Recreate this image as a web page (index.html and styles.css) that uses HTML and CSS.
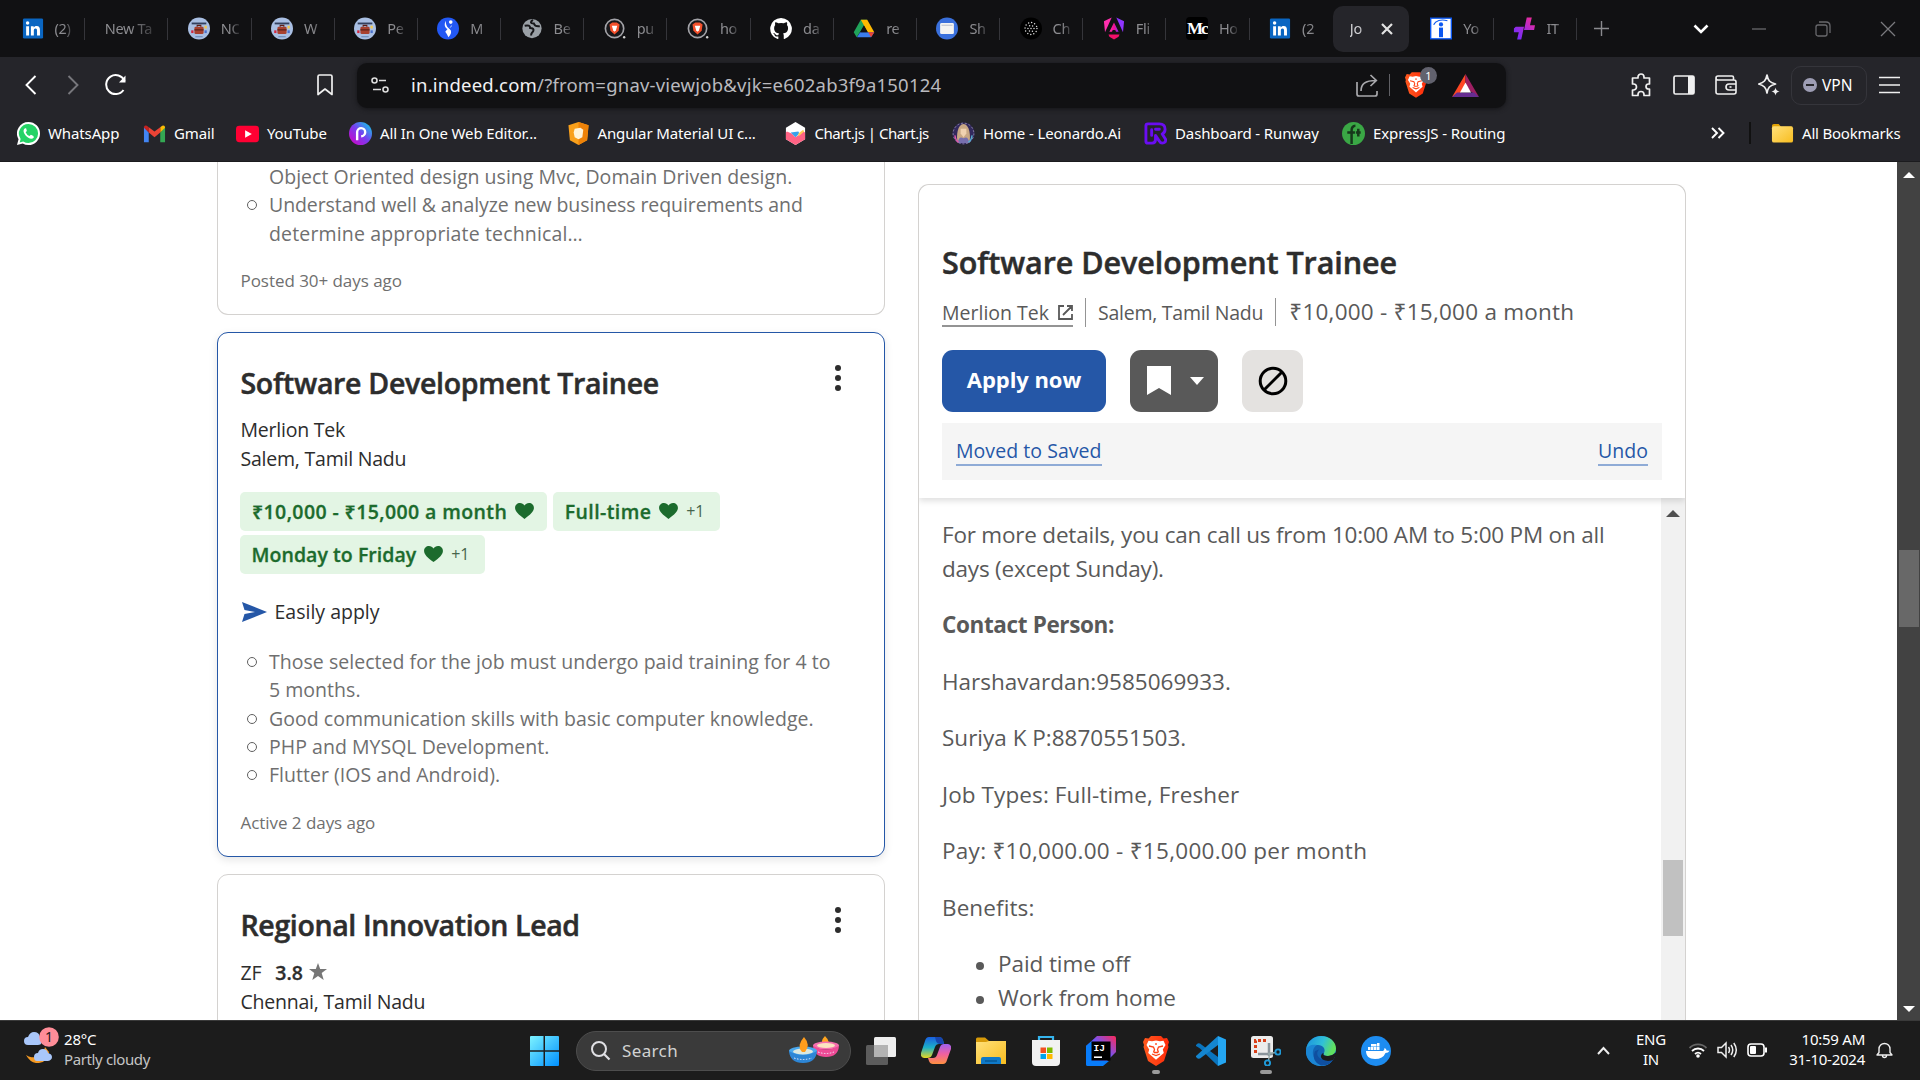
FILE: index.html
```html
<!DOCTYPE html>
<html lang="en">
<head>
<meta charset="utf-8">
<title>Software Development Trainee - Indeed</title>
<link rel="stylesheet" href="styles.css">
</head>
<body>
<svg class="defs" width="0" height="0" aria-hidden="true">
  <defs>
    <linearGradient id="gPink" x1="0" y1="0" x2="1" y2="0"><stop offset="0" stop-color="#ff2fae"/><stop offset=".5" stop-color="#f0108f"/><stop offset="1" stop-color="#8a2cff"/></linearGradient>
    <linearGradient id="gTensor" x1="0" y1="1" x2="1" y2="0"><stop offset="0" stop-color="#6a2bff"/><stop offset=".5" stop-color="#a42bd8"/><stop offset="1" stop-color="#ff2b8c"/></linearGradient>
    <linearGradient id="gPics" x1="0" y1="1" x2="1" y2="0"><stop offset="0" stop-color="#d900c0"/><stop offset=".5" stop-color="#7a3cf0"/><stop offset="1" stop-color="#00e0e8"/></linearGradient>
    <linearGradient id="gFolder" x1="0" y1="0" x2="1" y2="1"><stop offset="0" stop-color="#ffe07a"/><stop offset="1" stop-color="#f8bd1f"/></linearGradient>
    <linearGradient id="gWin" x1="0" y1="0" x2="1" y2="1"><stop offset="0" stop-color="#7df3ff"/><stop offset="1" stop-color="#0090ff"/></linearGradient>
    <linearGradient id="gCopA" x1="0" y1="0" x2="0" y2="1"><stop offset="0" stop-color="#1a5fe0"/><stop offset=".5" stop-color="#1cb0c8"/><stop offset="1" stop-color="#e8d820"/></linearGradient>
    <linearGradient id="gCopB" x1="0" y1="0" x2="0" y2="1"><stop offset="0" stop-color="#a060f0"/><stop offset=".5" stop-color="#f060a0"/><stop offset="1" stop-color="#ff9040"/></linearGradient>
    <linearGradient id="gEdge" x1="0" y1="0" x2="1" y2=".3"><stop offset="0" stop-color="#1a8fe0"/><stop offset=".6" stop-color="#30c0d8"/><stop offset="1" stop-color="#60e060"/></linearGradient>
    <linearGradient id="gIj" x1="0" y1="1" x2="1" y2="0"><stop offset="0" stop-color="#087cfa"/><stop offset=".55" stop-color="#6b57ff"/><stop offset="1" stop-color="#fe2857"/></linearGradient>
    <linearGradient id="gBrave" x1="0" y1="0" x2="1" y2="0"><stop offset="0" stop-color="#ff5a1f"/><stop offset="1" stop-color="#ff2a0a"/></linearGradient>
    <symbol id="linkedin" viewBox="0 0 24 24"><rect x="1" y="1" width="22" height="22" rx="1.500" fill="#0a66c2"/><path d="M4.500 9.500h3.200v10H4.500zM9.700 9.500h3v1.400c.6-1 1.700-1.700 3.200-1.700 3 0 3.700 1.900 3.700 4.600v5.700h-3.200v-5c0-1.300-.1-2.600-1.700-2.600s-1.800 1.200-1.800 2.500v5.100H9.700z" fill="#fff"/><circle cx="6.100" cy="6.100" r="1.900" fill="#fff"/></symbol>
    <symbol id="jobbag" viewBox="0 0 24 24"><circle cx="12" cy="12" r="12" fill="#a9bfe3"/><path d="M4 6.500h16" stroke="#33405e" stroke-width="2"/><rect x="7" y="10" width="10" height="8" rx="1.500" fill="#a8412f"/><path d="M10 10V8.600h4V10M7 13.500h10" stroke="#5d2018" stroke-width="1.200" fill="none"/><path d="M3.500 14h2.500v3H3.500z" fill="#d3273e"/><path d="M18 9h2.500v3H18z" fill="#f4c94b"/><path d="M18 14h2.500v3H18z" fill="#4a70cc"/><path d="M8 21h8" stroke="#5c7fae"/></symbol>
    <symbol id="brave" viewBox="0 0 26 30"><path d="M8 0h10l2.500 2.500L24 2l2 4-1 3 .5 2-4.500 14L13 30 5 25 .500 11 1 9 0 6l2-4 3.500.5z" fill="url(#gBrave)"/><path d="M13 4.500l4 .8 3.500-.5 2 4.200-2.700 4.500 1 3.500-3.500 3-4.300 3.800L8.700 20l-3.500-3 1-3.500L3.500 9l2-4.200 3.500.5z" fill="#fff"/><path d="M6 10l4.500 1 1 2.500-1 3M20 10l-4.500 1-1 2.500 1 3M13 7v2M9 18l4 1.500 4-1.500M11 16.500h4" stroke="#ff4315" stroke-width="1.300" fill="none"/></symbol>
    <symbol id="bravering" viewBox="0 0 24 24"><circle cx="11.500" cy="12" r="10" fill="#17171a" stroke="#a3a3a8" stroke-width="1.800"/><path d="M9 5.500h5l3 2-1 7-4.500 4-4.500-4-1-7z" fill="#f4502b"/><path d="M8.500 9h6l-1.500 5-1.500 1.500L10 14z" fill="#fff"/><circle cx="22" cy="21.500" r="1.300" fill="#d0d0d0"/></symbol>
    <symbol id="heart" viewBox="0 0 20 17"><path d="M10 17C3.500 12 0 9 0 5.200 0 2.200 2.300 0 5.200 0 7.200 0 9 1 10 2.600 11 1 12.800 0 14.800 0 17.700 0 20 2.200 20 5.200 20 9 16.500 12 10 17z" fill="#1c6b2d"/></symbol>
  </defs>
</svg>

<header class="browser">
  <div class="tabs">
    <div class="tab"><svg class="fav"><use href="#linkedin"/></svg><span>(2)</span></div>
    <div class="tab wide"><span>New Ta</span></div>
    <div class="tab"><svg class="fav"><use href="#jobbag"/></svg><span>NO</span></div>
    <div class="tab"><svg class="fav"><use href="#jobbag"/></svg><span>W</span></div>
    <div class="tab"><svg class="fav"><use href="#jobbag"/></svg><span>Pe</span></div>
    <div class="tab"><svg class="fav" viewBox="0 0 24 24"><circle cx="12" cy="12" r="12" fill="#2258f4"/><circle cx="15" cy="5" r="2" fill="#fff"/><path d="M9.500 3.500C7.500 8 8.500 11 11.500 12.500L9 15.500q2 2.500 3.500 6 4-4 2.500-7.500L12.500 11.500Q9.500 9 9.500 3.500zM16.500 8q-.5 3-3 3.500z" fill="#fff"/></svg><span>M</span></div>
    <div class="tab"><svg class="fav" viewBox="0 0 24 24"><circle cx="12" cy="12" r="10.500" fill="#9aa0a6"/><path d="M4 9c4-1 6 0 6 2.500 3 0 4 1 3.500 3-.5 2-2.500 1.500-2.500 5M13 2.500c-3 2-3 4 1 4 1 3 3 3.500 6.500 3" fill="none" stroke="#17171a" stroke-width="2.200"/></svg><span>Be</span></div>
    <div class="tab"><svg class="fav"><use href="#bravering"/></svg><span>pu</span></div>
    <div class="tab"><svg class="fav"><use href="#bravering"/></svg><span>ho</span></div>
    <div class="tab"><svg class="fav" viewBox="0 0 24 24"><path fill="#fff" d="M12 .5A11.800 11.800 0 0 0 8.300 23.500c.6.1.8-.3.8-.6v-2.200c-3.300.7-4-1.400-4-1.400-.5-1.400-1.300-1.800-1.300-1.800-1.100-.7.1-.7.1-.7 1.200.1 1.800 1.200 1.800 1.200 1.100 1.800 2.800 1.300 3.500 1 .1-.8.4-1.300.8-1.600-2.700-.3-5.500-1.300-5.500-5.900 0-1.300.5-2.400 1.200-3.200-.1-.3-.5-1.500.1-3.200 0 0 1-.3 3.300 1.200a11.500 11.500 0 0 1 6 0c2.300-1.500 3.300-1.200 3.300-1.200.7 1.700.2 2.900.1 3.200.8.800 1.200 1.900 1.200 3.200 0 4.600-2.800 5.600-5.500 5.900.4.400.8 1.100.8 2.200v3.300c0 .3.200.7.800.6A11.800 11.800 0 0 0 12 .5z"/></svg><span>da</span></div>
    <div class="tab"><svg class="fav" viewBox="0 0 24 24"><path d="M8.500 2.500h7l-8 13.500-3.500 5.500L.8 16z" fill="#20a35a"/><path d="M8.500 2.500h7L23.200 16h-7z" fill="#ffba00"/><path d="M7.800 16h15.400l-3.500 5.500H4.300z" fill="#3b7ded"/><path d="M16.500 16h6.700l-3.500 5.500z" fill="#ea4335"/><path d="M12 9l-4 7h8z" fill="#111113"/></svg><span>re</span></div>
    <div class="tab"><svg class="fav" viewBox="0 0 24 24"><circle cx="12" cy="12" r="12" fill="#3a70dc"/><rect x="4.500" y="6" width="15" height="12" rx="1.500" fill="#f4f4f2"/><path d="M6 8.500h12" stroke="#c9cdd6" stroke-width="1.500"/></svg><span>Sh</span></div>
    <div class="tab"><svg class="fav" viewBox="0 0 24 24"><circle cx="12" cy="12" r="12" fill="#000"/><g fill="none" stroke="#ddd" stroke-width="1.600" stroke-linecap="round"><circle cx="12" cy="12" r="6.500" stroke-dasharray="0 3.400"/><circle cx="12" cy="12" r="3.300" stroke-dasharray="0 3.400"/><path d="M12 12h.01"/></g></svg><span>Ch</span></div>
    <div class="tab"><svg class="fav" viewBox="0 0 24 24"><path d="M9.500 0L1 4l1.200 12z" fill="#ff2fae"/><path d="M14.500 0L23 4l-1.200 12z" fill="#8f35ff"/><path d="M12 5.500l5 10h-2.800l-.8-2h-2.800l-.8 2H7z" fill="url(#gPink)"/><path d="M6 18.500h12l-1 2.500-5 3-5-3z" fill="#f0106a"/></svg><span>Fli</span></div>
    <div class="tab"><span class="fav medium">Mc</span><span>Ho</span></div>
    <div class="tab plain"><svg class="fav"><use href="#linkedin"/></svg><span>(2</span></div>
    <div class="tab active"><span>Jo</span><svg class="close" viewBox="0 0 12 12"><path d="M1 1l10 10M11 1L1 11" stroke="#e2e2e2" stroke-width="2.200"/></svg></div>
    <div class="tab"><svg class="fav" viewBox="0 0 24 24"><rect width="24" height="24" fill="#0b57f0"/><rect x="1.500" y="1.500" width="21" height="21" fill="#fff"/><path d="M4 8C6 3.500 12 1.500 19 3.500" fill="none" stroke="#0b57f0" stroke-width="1.300"/><circle cx="12" cy="7.500" r="2.300" fill="#0b57f0"/><path d="M9.800 11h4.400v10.500H9.800z" fill="#0b57f0"/></svg><span>Yo</span></div>
    <div class="tab"><svg class="fav" viewBox="0 0 24 24"><path d="M1 12l2-2h9l-3 14H4.500l1.800-8H1zM15 0h5.500l-2 8.500H24l-1 5H12z" fill="url(#gTensor)"/></svg><span>IT</span></div>
    <svg class="plus" viewBox="0 0 16 16"><path d="M8 0v16M0 8h16" stroke="#8a8a8e" stroke-width="1.500"/></svg>
    <div class="winbtns">
      <svg class="chev" viewBox="0 0 16 10" width="16" height="10"><path d="M1.500 1.500L8 8l6.500-6.500" fill="none" stroke="#fff" stroke-width="2.600"/></svg>
      <svg viewBox="0 0 16 16" width="16" height="16"><path d="M1 8h14" stroke="#68686c" stroke-width="1.300"/></svg>
      <svg viewBox="0 0 16 16" width="16" height="16"><g fill="none" stroke="#68686c" stroke-width="1.300"><rect x="1" y="4" width="11" height="11" rx="2"/><path d="M4 1h7q4 0 4 4v7"/></g></svg>
      <svg viewBox="0 0 16 16" width="16" height="16"><path d="M1 1l14 14M15 1L1 15" stroke="#7a7a7e" stroke-width="1.300"/></svg>
    </div>
  </div>

  <div class="toolbar">
    <div class="nav">
      <svg width="12" height="20" viewBox="0 0 12 20"><path d="M10.500 1L1.500 10l9 9" fill="none" stroke="#fff" stroke-width="1.900"/></svg>
      <svg width="12" height="20" viewBox="0 0 12 20"><path d="M1.500 1l9 9-9 9" fill="none" stroke="#77777c" stroke-width="1.900"/></svg>
      <svg class="reload" width="24" height="22" viewBox="0 0 24 22"><path d="M20.500 7A9.500 9.500 0 1 0 19.500 16" fill="none" stroke="#fff" stroke-width="2"/><path d="M15 8.500h6.500V1.500z" fill="#fff"/></svg>
      <svg class="mark" width="16" height="22" viewBox="0 0 16 22"><path d="M1 2.500Q1 1 2.500 1h11Q15 1 15 2.500V20.500L8 15l-7 5.500z" fill="none" stroke="#f0f0f0" stroke-width="1.700" stroke-linejoin="round"/></svg>
    </div>
    <div class="urlbar">
      <svg width="18" height="18" viewBox="0 0 18 18"><g fill="none" stroke="#ddd" stroke-width="1.600"><circle cx="3.500" cy="4.500" r="2.500"/><circle cx="14.500" cy="13.500" r="2.500"/><path d="M8 4.500h7M2 13.500h8"/></g></svg>
      <div class="url"><b>in.indeed.com</b>/?from=gnav-viewjob&amp;vjk=e602ab3f9a150124</div>
      <svg class="share" width="22" height="23" viewBox="0 0 22 23"><g fill="none" stroke="#a8a8ac" stroke-width="1.700"><path d="M1 8v12q0 2 2 2h16q2 0 2-2v-3M5 17c0-7 4-10.500 15-10.500M14.500 1l5.800 5.500L14.500 12"/></g></svg>
      <i class="vline"></i>
      <span class="shield"><svg width="22" height="26"><use href="#brave"/></svg><em>1</em></span>
      <svg width="27" height="23" viewBox="0 0 27 23"><path d="M13.500 0L0 23l13.500-7z" fill="#ff4724"/><path d="M13.500 0L27 23l-13.500-9z" fill="#9e1f63"/><path d="M0 23h27l-5-4.500H5z" fill="#662d91"/><path d="M13.500 8.500L8 18.500h11z" fill="#fff"/></svg>
    </div>
    <div class="tools">
      <svg width="22" height="24" viewBox="0 0 22 24"><path d="M1.500 5H7V4a2.500 2.500 0 0 1 6 0v1h5.500v6h-1a2.500 2.500 0 0 0 0 5h1v6.500H13v-1a2.500 2.500 0 0 0-6 0v1H1.500V17h1a2.500 2.500 0 0 0 0-6h-1z" transform="translate(1)" fill="none" stroke="#f0f0f0" stroke-width="1.700" stroke-linejoin="round"/></svg>
      <svg width="22" height="20" viewBox="0 0 22 20"><rect x="1" y="1" width="20" height="18" rx="1.500" fill="none" stroke="#f0f0f0" stroke-width="1.700"/><path d="M15 1h6v18h-6z" fill="#f0f0f0"/></svg>
      <svg width="22" height="20" viewBox="0 0 22 20"><g fill="none" stroke="#f0f0f0" stroke-width="1.600"><path d="M18.500 5V2.500Q18.500 1 17 1H3Q1 1 1 3t2 2h16q2 0 2 2v10q0 2-2 2H3q-2 0-2-2V3M21 9h-7a3 3 0 0 0 0 6h7"/><path d="M14.500 12h2"/></g></svg>
      <svg width="22" height="22" viewBox="0 0 22 22"><path d="M9 1c1 5.500 2.500 7.500 8.500 9-6 1.500-7.500 3.500-8.500 9C8 13.500 6 11.500.800 10 6 8.500 8 6.500 9 1z" fill="none" stroke="#f0f0f0" stroke-width="1.700" stroke-linejoin="round"/><path d="M17.500 13.500q.5 3.500 4 4-3.500.5-4 4-.5-3.500-4-4 3.500-.5 4-4z" fill="#f0f0f0"/></svg>
      <div class="vpn"><i></i>VPN</div>
      <svg class="menu" width="21" height="18" viewBox="0 0 21 18"><path d="M0 1.500h21M0 9h21M0 16.500h21" stroke="#f0f0f0" stroke-width="1.700"/></svg>
    </div>
  </div>

  <div class="bookmarks">
    <div><svg viewBox="0 0 24 24"><path d="M12 0a12 12 0 0 1 0 24q-3.500 0-6-1.600L0 24l1.600-6A12 12 0 0 1 12 0z" fill="#fff"/><path d="M12 2a10 10 0 0 1 0 20q-3 0-5.500-1.600L2.800 21.300l1-3.600A10 10 0 0 1 12 2z" fill="#25d366"/><path d="M8.500 6.500C6 8 6.500 11 9 14s6 4.500 8.500 2.500l-.3-2-2.700-1.300-1.500 1.500q-2.700-1-4-4L10.300 9.300 9.500 6.600z" fill="#fff"/></svg>WhatsApp</div>
    <div><svg viewBox="0 0 24 24"><path d="M1 5v16h5V11z" fill="#4285f4"/><path d="M18 11v10h5V5z" fill="#34a853"/><path d="M1 6l5 5V5.500L4 4Q1 3 1 6z" fill="#c5221f"/><path d="M18 5.500V11l5-5q0-3-3-2z" fill="#fbbc04"/><path d="M6 5.500V11l6 5 6-5V5.500L12 10z" fill="#ea4335"/></svg>Gmail</div>
    <div><svg viewBox="0 0 24 24"><rect x="0" y="4" width="24" height="17" rx="3.500" fill="#f03"/><path d="M9.500 8.500v8l7-4z" fill="#fff"/></svg>YouTube</div>
    <div><svg viewBox="0 0 24 24"><circle cx="12" cy="12" r="12" fill="url(#gPics)"/><path d="M8.500 19v-8.500a4.200 4.200 0 1 1 4.200 4.300" fill="none" stroke="#fff" stroke-width="2.500"/></svg>All In One Web Editor...</div>
    <div><svg viewBox="0 0 24 24"><path d="M12 0l10.500 3.500L21 19l-9 5-9-5L1.500 3.500z" fill="#f9a01b"/><path d="M12 0l10.500 3.500L21 19l-9 5z" fill="#ee8208"/><path d="M8 7l6-1 3 2-1 8-4 2-4-2-1-5z" fill="#fff3d8"/></svg>Angular Material UI c...</div>
    <div class="chart"><svg viewBox="0 0 24 24"><path d="M12 0l10 6v12l-10 6-10-6V6z" fill="#fff"/><path d="M3 10l5 2 4 4 8-6 2 1v7l-10 6-10-6v-7z" fill="#ff6384"/><path d="M7 11l5 5 4-4-1-2z" fill="#36a2eb"/><path d="M15 12l5-4 1 2-6 5z" fill="#ffce56"/></svg>Chart.js | Chart.js</div>
    <div><svg viewBox="0 0 24 24"><circle cx="12" cy="12" r="11.500" fill="#33295d"/><path d="M6 22C4 14 6 2 12 2s8 12 6 20z" fill="#c9a884"/><path d="M9 7h6v5l-3 4-3-4z" fill="#f0d2b0"/><path d="M6 22q1-8 6-5 5-3 6 5z" fill="#776fae"/><circle cx="12" cy="12" r="10.800" fill="none" stroke="#8f8ba8" stroke-dasharray="2 2"/><path d="M3 14q1 6 4 7" stroke="#e056a8" fill="none" stroke-width="1.500"/><path d="M21 14q-1 6-4 7" stroke="#55b0d0" fill="none" stroke-width="1.500"/></svg>Home - Leonardo.Ai</div>
    <div><svg viewBox="0 0 24 24"><path d="M7 22H4q-2 0-2-2V4q0-2 2-2h12q6 0 6 5.500 0 3.500-3 5l3.500 5.500q.5 4-3.500 4-2 0-3-2l-4-6v4q0 4-3.500 4zM8 8v6M12 7.500h4" fill="none" stroke="#6a0df2" stroke-width="3" stroke-linejoin="round" stroke-linecap="round"/></svg>Dashboard - Runway</div>
    <div><svg viewBox="0 0 24 24"><circle cx="12" cy="12" r="12" fill="#3aa745"/><path d="M10 23V9q0-5 4-5M5.500 11h8M17 7v8M14.500 11h5" fill="none" stroke="#16371b" stroke-width="2.600"/></svg>ExpressJS - Routing</div>
    <div class="more"><svg viewBox="0 0 14 12"><path d="M1 1l5 5-5 5M7.500 1l5 5-5 5" fill="none" stroke="#fff" stroke-width="1.900"/></svg><i></i></div>
    <div class="all"><svg viewBox="0 0 24 24"><path d="M1 4q0-2 2-2h5l2.500 3H22v6H1z" fill="#e0a106"/><rect x="1" y="4.500" width="22" height="17" rx="2" fill="url(#gFolder)"/></svg>All Bookmarks</div>
  </div>
</header>

<main class="page">
  <section class="list">
    <article class="card first">
      <ul class="points">
        <li class="cont">Object Oriented design using Mvc, Domain Driven design.</li>
        <li>Understand well &amp; analyze new business requirements and <span class="tail">determine appropriate technical…</span></li>
      </ul>
      <p class="age">Posted 30+ days ago</p>
    </article>

    <article class="card selected">
      <div class="head"><h2>Software Development Trainee</h2><span class="kebab"><i></i><i></i><i></i></span></div>
      <div class="company"><p>Merlion Tek</p><p class="place">Salem, Tamil Nadu</p></div>
      <div class="pills">
        <span class="pill"><b class="pay">₹10,000 - ₹15,000 a month</b><svg><use href="#heart"/></svg></span>
        <span class="pill plus1"><b class="ft">Full-time</b><svg><use href="#heart"/></svg><small>+1</small></span>
        <span class="pill plus1"><b>Monday to Friday</b><svg><use href="#heart"/></svg><small>+1</small></span>
      </div>
      <p class="easy"><svg width="25" height="20" viewBox="0 0 25 20"><path d="M0 0l25 10L0 20l2.500-8L13 10 2.500 8z" fill="#2557a7"/></svg>Easily apply</p>
      <ul class="points">
        <li>Those selected for the job must undergo paid training for 4 to 5 months.</li>
        <li>Good communication skills with basic computer knowledge.</li>
        <li>PHP and MYSQL Development.</li>
        <li>Flutter (IOS and Android).</li>
      </ul>
      <p class="age">Active 2 days ago</p>
    </article>

    <article class="card">
      <div class="head"><h2 class="tight">Regional Innovation Lead</h2><span class="kebab"><i></i><i></i><i></i></span></div>
      <div class="company"><p class="rating">ZF <b>3.8</b><svg width="18" height="17" viewBox="0 0 18 17"><path d="M9 0l2.200 6H18l-5.300 4 2 7L9 13l-5.700 4 2-7L0 6h6.800z" fill="#767676"/></svg></p><p class="place">Chennai, Tamil Nadu</p></div>
    </article>
  </section>

  <section class="detail">
    <div class="dhead">
      <h1>Software Development Trainee</h1>
      <div class="meta">
        <a class="firm">Merlion Tek<svg width="15" height="15" viewBox="0 0 15 15"><path d="M6 1H1v13h13V9M9 1h5v5M14 1L5 10" fill="none" stroke="#595959" stroke-width="1.800"/></svg></a>
        <span class="loc">Salem, Tamil Nadu</span>
        <span class="sal">₹10,000 - ₹15,000 a month</span>
      </div>
      <div class="actions">
        <button class="apply">Apply now</button>
        <button class="save"><svg width="24" height="29" viewBox="0 0 24 29"><path d="M0 0h24v29l-12-7-12 7z" fill="#fff"/></svg><svg width="14" height="8" viewBox="0 0 14 8"><path d="M0 0h14L7 8z" fill="#fff"/></svg></button>
        <button class="block"><svg width="30" height="30" viewBox="0 0 30 30"><g fill="none" stroke="#000" stroke-width="3"><circle cx="15" cy="15" r="12.800"/><path d="M6 24L24 6"/></g></svg></button>
      </div>
      <div class="moved"><a>Moved to Saved</a><a>Undo</a></div>
    </div>
    <div class="dbody">
      <div class="copy">
        <p>For more details, you can call us from 10:00 AM to 5:00 PM on all days (except Sunday).</p>
        <p><b>Contact Person:</b></p>
        <p class="num">Harshavardan:9585069933.</p>
        <p class="num">Suriya K P:8870551503.</p>
        <p class="types">Job Types: Full-time, Fresher</p>
        <p class="wide">Pay: ₹10,000.00 - ₹15,000.00 per month</p>
        <p class="types">Benefits:</p>
        <ul><li>Paid time off</li><li>Work from home</li></ul>
      </div>
      <div class="dscroll"><svg width="14" height="7" viewBox="0 0 14 7"><path d="M0 7l7-7 7 7z" fill="#505050"/></svg><i></i></div>
    </div>
  </section>

  <div class="scroll">
    <svg width="12" height="6" viewBox="0 0 12 6"><path d="M0 6l6-6 6 6z" fill="#fff"/></svg>
    <i></i>
    <svg width="12" height="6" viewBox="0 0 12 6"><path d="M0 0l6 6 6-6z" fill="#fff"/></svg>
  </div>
</main>

<footer class="taskbar">
  <div class="weather">
    <svg width="36" height="36" viewBox="0 0 36 36"><path d="M22 20a12 12 0 0 1-19 8q5 9 13 8 10-2 10-11z" fill="#f59a23"/><path d="M5 18q-4 0-4-4t4-4q2-5 6-5 5 0 6 5 4 8-2 8zM14 34q-3 0-3-4t4-4q1-4 5-4t5 4q4 1 4 4t-4 4z" fill="#a9c7fa"/><circle cx="26" cy="10" r="9.800" fill="#ff8d98"/><text x="26" y="15" text-anchor="middle" font-family="Noto Sans" font-size="14" fill="#26181a">1</text></svg>
    <div class="temp"><p>28°C</p><p class="cond">Partly cloudy</p></div>
  </div>
  <div class="apps">
    <svg class="win" width="29" height="30" viewBox="0 0 29 30"><path d="M0 1q0-1 1-1h12.500v14.200H0zM15 0h13q1 0 1 1v13.200H15zM0 15.700h13.500V30H1q-1 0-1-1zM15 15.700h14V29q0 1-1 1H15z" fill="url(#gWin)"/></svg>
    <div class="search"><svg width="20" height="20" viewBox="0 0 20 20"><circle cx="8" cy="8" r="7" fill="none" stroke="#e0e0e4" stroke-width="2"/><path d="M13 13l5.500 5.500" stroke="#e0e0e4" stroke-width="2.200"/></svg>Search
      <svg class="diya" width="50" height="30" viewBox="0 0 50 30"><path d="M36 0q6 6 2 10h-4q-3-5 2-10z" fill="#ffa51f"/><ellipse cx="37" cy="9.500" rx="13" ry="4" fill="#f66fae"/><ellipse cx="37" cy="9.500" rx="9" ry="2.500" fill="#fbe3c0"/><path d="M24 10q1 11 13 11t13-11q-13 7-26 0z" fill="#ee4b96"/><ellipse cx="14" cy="15" rx="14" ry="4.500" fill="#4aa8ee"/><ellipse cx="14" cy="15.500" rx="10" ry="3" fill="#dbe8e0"/><path d="M15 1q7 8 1 15h-3q-6-6 2-15z" fill="#ff9d1c"/><path d="M0 15q1 12 14 12t14-12q-14 8-28 0z" fill="#2d86d6"/><path d="M5 22q9 3 18 0M29 16q8 3 16 0" stroke="#eef" stroke-width="1" stroke-dasharray="1.500 1.500" fill="none"/></svg></div>
    <div class="app"><svg width="30" height="28" viewBox="0 0 30 28"><rect x="0" y="8" width="22" height="20" rx="1.500" fill="#5c5c5c"/><rect x="8" y="0" width="22" height="20" rx="1.500" fill="#eee"/><path d="M8 8h14v12H8z" fill="#b3b3b3"/></svg></div>
    <div class="app"><svg width="30" height="27" viewBox="0 0 30 27"><path d="M8 0h10q3 0 4 3l1 4h-5q-3 0-4 3l-3 8q-1 3-5 3H3q-4-1-3-5L4 4q1-4 4-4z" fill="url(#gCopA)"/><path d="M14 0h4q3 0 4 3l1 4h-4q-3 0-4-3z" fill="#1745ad"/><path d="M22 27H12q-3 0-4-3l-1-3h5q3 0 4-3l3-8q1-3 4-3h4q4 1 3 5l-4 11q-1 4-4 4z" fill="url(#gCopB)"/></svg></div>
    <div class="app"><svg width="30" height="28" viewBox="0 0 30 28"><path d="M0 2q0-1.500 1.500-1.500H9L13 4h15.500Q30 4 30 5.500V9H0z" fill="#d79a08"/><path d="M0 5h10l3-1h17v23H0z" fill="url(#gFolder)"/><path d="M5 27v-5q0-2 2-2h16q2 0 2 2v5z" fill="#0f79c8"/><path d="M9 24h12" stroke="#075894" stroke-width="1.500"/></svg></div>
    <div class="app"><svg width="30" height="30" viewBox="0 0 30 30"><path d="M8 6V1h14v5" fill="none" stroke="#35b5ee" stroke-width="2.200"/><path d="M1 4h28v22q0 4-4 4H5q-4 0-4-4z" fill="#f2f2f2"/><path d="M9.500 11.500H15V17H9.500z" fill="#f25022"/><path d="M16 11.500h5.500V17H16z" fill="#7fba00"/><path d="M9.500 18H15v5H9.500z" fill="#00a4ef"/><path d="M16 18h5.500v5H16z" fill="#ffb900"/></svg></div>
    <div class="app"><svg width="30" height="30" viewBox="0 0 30 30"><path d="M11 0h17q2 0 2 2v14L17 29l-3 1H2q-2 0-2-2V10z" fill="url(#gIj)"/><path d="M0 10l6-5v20h17l-6 5H2q-2 0-2-2z" fill="#087cfa"/><rect x="5.500" y="5.500" width="19" height="19" fill="#000"/><path d="M8 21.200h8" stroke="#fff" stroke-width="1.600"/><text x="7.500" y="15" font-family="Liberation Mono" font-weight="700" font-size="9.500" fill="#fff">IJ</text></svg></div>
    <div class="app run"><svg width="26" height="30"><use href="#brave"/></svg></div>
    <div class="app"><svg width="30" height="30" viewBox="0 0 30 30"><path d="M22 30L4 12.500 2.500 11.500 0 10v-1l2-1.700 2 .2L22 21z" fill="#0a74bd"/><path d="M22 0v9L4 22.500l-2 .2L0 21v-1z" fill="#1486d0"/><path d="M22 0l8 3.500v23L22 30z" fill="#24a6f2"/></svg></div>
    <div class="app run long"><svg width="30" height="30" viewBox="0 0 30 30"><rect width="22" height="22" rx="2.500" fill="#ececec"/><path d="M4.500 17V4.500H17" fill="none" stroke="#d9401a" stroke-width="3" stroke-dasharray="3 2"/><path d="M18 7v13M7 18h15" stroke="#8b959c" stroke-width="2.500"/><path d="M17 17.500l8-1M18.500 18l-1 7" stroke="#9aa" stroke-width="1.500"/><circle cx="27" cy="16" r="2.600" fill="none" stroke="#209ad8" stroke-width="1.900"/><circle cx="16.500" cy="27" r="2.600" fill="none" stroke="#209ad8" stroke-width="1.900"/></svg></div>
    <div class="app"><svg width="30" height="30" viewBox="0 0 30 30"><circle cx="15" cy="15" r="15" fill="#1265b4"/><path d="M0 14C1 5 8 0 15 0c9 0 15 6 15 12.500 0 5-4 7.500-8 7.500-3 0-5-1-4-3 2-4-1-8-6-8C6 9 1 11 0 14z" fill="url(#gEdge)"/><path d="M0 14c1-4 6-6 11-5-4 2-6 9-2 14 3 4 9 5 14 3l3-1q-5 6-13 5C5 29-1 22 0 14z" fill="#1b86d4"/><path d="M13 13.500q-3.500 4 0 8 5 5 14 2.500-4 6-12 5.500Q5 25 9 15z" fill="#0f4fa0"/><path d="M17.500 17q-1.500 3 4.500 3 4 0 8-3.500v3l-3 4.500q-6 2-10.500-.5-3.500-3.500.5-6.500z" fill="#1c1c1c"/></svg></div>
    <div class="app"><svg width="30" height="30" viewBox="0 0 30 30"><circle cx="15" cy="15" r="15" fill="#1d8cf0"/><path d="M5 15h17q1.500-.5 1.500-3 2 .5 2 2.500l3 .3q-1 2.200-4 2.200-2.500 6-10.500 6C8 23 5 20 5 15z" fill="#fff"/><path d="M7 11h2.500v3H7zM10 11h2.500v3H10zM13 11h2.500v3H13zM16 11h2.500v3H16zM10 8h5.500v2.500H10zM16 7h2.500v3.500H16z" fill="#fff"/></svg></div>
  </div>
  <div class="tray">
    <svg width="13" height="9" viewBox="0 0 13 9"><path d="M1 8l5.500-6L12 8" fill="none" stroke="#eee" stroke-width="2"/></svg>
    <div class="lang">ENG<br>IN</div>
    <div class="status">
      <svg width="20" height="16" viewBox="0 0 20 16"><path d="M1.500 6a12 12 0 0 1 17 0" fill="none" stroke="#666" stroke-width="1.800"/><path d="M4 9a8.500 8.500 0 0 1 12 0M7 12a4.500 4.500 0 0 1 6 0" fill="none" stroke="#fff" stroke-width="1.800"/><circle cx="10" cy="14" r="1.800" fill="#fff"/></svg>
      <svg width="21" height="18" viewBox="0 0 21 18"><path d="M1 6.500h3.500L9 2v14l-4.500-4.500H1zM11.500 6q2 3 0 6M14 4q3.500 5 0 10M16.800 2q5 7 0 14" fill="none" stroke="#eee" stroke-width="1.500"/></svg>
      <svg width="21" height="14" viewBox="0 0 21 14"><rect x="1" y="1" width="16" height="12" rx="3" fill="none" stroke="#fff" stroke-width="1.600"/><rect x="3" y="3" width="6" height="8" rx="1" fill="#fff"/><path d="M19 4.500v5" stroke="#fff" stroke-width="2"/></svg>
    </div>
    <div class="clock">10:59 AM<br>31-10-2024</div>
    <svg class="bell" width="17" height="18" viewBox="0 0 17 18"><path d="M3 8a5.500 5.500 0 0 1 11 0v3.500l2 2.500H1l2-2.500zM6.500 14.500a2 2 0 0 0 4 0" fill="none" stroke="#eee" stroke-width="1.400" stroke-linejoin="round"/></svg>
  </div>
</footer>
</body>
</html>
```
FILE: styles.css
```css
* { box-sizing: border-box; }
body {
  margin: 0; width: 1920px; height: 1080px; overflow: hidden;
  display: flex; flex-direction: column; background: #fff;
  font-family: "Noto Sans", "Open Sans", sans-serif;
}
p, h1, h2, ul { margin: 0; padding: 0; }
svg { display: block; flex: none; }
.defs { position: absolute; }

/* Browser chrome */
.browser { flex: none; height: 162px; background: #25252a; color: #fff; border-bottom: 1px solid #1b1b1e; }
.tabs { height: 57px; background: #111113; display: flex; align-items: center; padding-left: 2px; }
.tab {
  flex: none; width: 83.180px; height: 22px; padding-left: 19.500px; display: flex; align-items: center; gap: 11px;
  border-right: 1.500px solid #35353a; font-size: 14.500px; color: #8c8c90; letter-spacing: -.3px;
}
.tab > span:last-of-type:not(.medium) {
  width: 18px; white-space: nowrap; line-height: 20px; margin-top: -1px;
  mask-image: linear-gradient(90deg, #000 50%, rgba(0, 0, 0, .25));
}
.tab.wide > span:last-of-type:not(.medium) { width: 50px; }
.tab.plain { border: 0; }
.tab.active {
  width: 76px; height: 46px; margin: 0 2px 0 0; padding-left: 17px; gap: 13px;
  border: 0; border-radius: 10px; background: #25252a; color: #d0d0d4;
}
.fav { width: 22px; height: 23px; flex: none; }
.medium { background: #000; border-radius: 4px; overflow: hidden; color: #fff; font: 700 17px/23px "Liberation Serif", serif; padding-left: 1px; letter-spacing: -2px; }
.close { width: 12px; height: 12px; }
.plus { width: 15px; height: 15px; margin-left: 17px; }
.winbtns { flex: 1; display: flex; align-items: center; padding-left: 84px; gap: 48.500px; }
.winbtns .chev { margin-right: -7px; }

.toolbar { height: 56px; display: flex; align-items: center; }
.nav { width: 357px; display: flex; align-items: center; padding-left: 25px; gap: 30px; }
.nav .reload { margin-left: -5px; }
.nav .mark { margin-left: 159px; }
.urlbar {
  width: 1149px; height: 45px; background: #111113; border-radius: 10px; box-shadow: 0 1px 5px #141417;
  display: flex; align-items: center; padding: 0 27px 0 14px;
}
.url { margin-left: 22px; flex: 1; font-size: 18.500px; line-height: 26px; color: #b9b9be; letter-spacing: .21px; white-space: nowrap; }
.url b { color: #f2f2f4; font-weight: 400; }
.vline { width: 1.500px; height: 22px; background: #606065; margin: 0 15px 0 11px; }
.shield { position: relative; margin-right: 25px; }
.shield em {
  position: absolute; left: 15px; top: -5px; width: 17px; height: 17px; border-radius: 50%;
  background: #62626e; font: 11px/17px "Noto Sans", sans-serif; text-align: center;
}
.tools { flex: 1; display: flex; align-items: center; gap: 20.500px; padding-left: 124px; }
.vpn { width: 76px; height: 39px; margin: 0 -9px; border: 1.500px solid #35353b; border-radius: 10px; display: flex; align-items: center; gap: 5px; padding-left: 11px; font-size: 15.500px; }
.vpn i { width: 14px; height: 14px; border-radius: 50%; background: linear-gradient(#25252a, #25252a) center / 8px 2px no-repeat #9d9db4; }

.bookmarks {
  height: 40px; display: grid; align-items: center; padding-left: 17px; white-space: nowrap; font-size: 15px; letter-spacing: -.12px;
  grid-template-columns: 126px 93px 113px 217.500px 217px 168.500px 192px 198px 369px 60px 1fr;
}
.bookmarks > div { display: flex; align-items: center; gap: 8px; line-height: 24px; }
.bookmarks svg { width: 23px; height: 23px; }
.bookmarks .chart { letter-spacing: -.5px; }
.bookmarks .all { letter-spacing: -.2px; }
.bookmarks .more { gap: 24px; }
.bookmarks .more svg { width: 14px; height: 12px; }
.more i { width: 2px; height: 22px; background: #111; }

/* Job search page */
.page { flex: none; height: 858px; overflow: hidden; display: flex; font-family: "Open Sans", "Noto Sans", sans-serif; }
.list { width: 668px; margin-left: 217px; display: flex; flex-direction: column; gap: 17px; flex: none; }
.card { border: 1px solid #d4d2d0; border-radius: 11px; padding: 32px 23px 22px 22.500px; flex: none; background: #fff; }
.card.first { border-top: 0; border-radius: 0 0 11px 11px; padding-top: 1px; height: 153px; }
.card.selected { height: 525px; border-color: #2557a7; box-shadow: 0 3px 8px rgba(0, 0, 0, .1); }
.head { display: flex; justify-content: space-between; }
h1, h2 { font-weight: 600; color: #2d2d2d; -webkit-text-stroke: .5px #2d2d2d; white-space: nowrap; }
h2 { font-size: 28.500px; line-height: 36px; letter-spacing: -.3px; }
h2.tight { letter-spacing: -.37px; }
.kebab { width: 6px; margin-right: 20px; display: flex; flex-direction: column; gap: 4px; }
.kebab i { width: 6px; height: 6px; border-radius: 50%; background: #2d2d2d; }
.company { margin-top: 14px; font-size: 19.500px; line-height: 29px; color: #2d2d2d; letter-spacing: -.22px; }
.rating { display: flex; align-items: center; padding-top: 1px; }
.rating b { font-weight: 600; -webkit-text-stroke: .3px; margin: 0 6px 0 14px; letter-spacing: 0; }
.rating svg { margin-top: -2px; }
.pills { display: flex; flex-wrap: wrap; gap: 4.500px 6px; margin: 19px 0 24px -.5px; }
.pill { height: 38.500px; border-radius: 5px; background: #e3f5e4; color: #1c6b2d; display: flex; align-items: center; padding: 0 13px 0 12px; gap: 8px; font-size: 19.500px; letter-spacing: .05px; }
.pill b { font-weight: 600; -webkit-text-stroke: .3px; line-height: 37px; }
.pill .pay { letter-spacing: .4px; }
.pill .ft { letter-spacing: .4px; }
.pill svg { width: 19px; height: 16px; }
.pill small { font-size: 16px; color: #47654c; letter-spacing: -.3px; }
.plus1 { padding: 0 16px 0 11.500px; }
.easy { display: flex; align-items: center; gap: 8px; padding-left: 1px; font-size: 19.500px; line-height: 28px; color: #2d2d2d; letter-spacing: 0; }
.points { list-style: none; margin-top: 22.500px; padding: 0 22px 0 28.500px; font-size: 19.500px; line-height: 28.300px; color: #6f6f6f; letter-spacing: .03px; }
.first .points { margin-top: 0; padding-right: 0; letter-spacing: -.08px; }
.first .cont { letter-spacing: .03px; }
.tail { letter-spacing: .15px; }
.points li { position: relative; }
.points li:not(.cont)::before { content: ""; position: absolute; left: -22px; top: 9px; width: 8px; height: 8px; border: 1px solid #5f5f5f; border-radius: 50%; }
.age { margin-top: 22px; font-size: 17px; line-height: 24px; color: #6f6f6f; letter-spacing: -.05px; }
.first .age { margin-top: 21px; }

.detail { width: 768px; margin: 22px 0 0 33px; border: 1px solid #d4d2d0; border-bottom: 0; border-radius: 11px 11px 0 0; display: flex; flex-direction: column; flex: none; }
.dhead { position: relative; height: 313px; flex: none; padding: 58px 23px 0; border-radius: 11px 11px 0 0; background: #fff; box-shadow: 0 3px 6px rgba(0, 0, 0, .13); clip-path: inset(0 0 -20px 0); }
h1 { font-size: 30.500px; line-height: 38px; letter-spacing: -.06px; }
.meta { display: flex; height: 30px; margin-top: 16px; align-items: center; color: #595959; font-size: 19.500px; line-height: 29px; letter-spacing: -.25px; white-space: nowrap; }
.firm { height: 29px; display: flex; align-items: center; gap: 9px; box-shadow: inset 0 -2px #949494; letter-spacing: 0; }
.loc, .sal { margin-left: 12px; padding-left: 12px; border-left: 1.500px solid #949494; }
.sal { font-size: 22.500px; line-height: 28px; letter-spacing: .24px; padding-left: 13px; }
.actions { display: flex; gap: 24px; margin-top: 23px; }
button { height: 61.500px; border: 0; border-radius: 11px; padding: 0; display: flex; align-items: center; justify-content: center; }
.apply { width: 164px; background: #2557a7; color: #fff; font: 700 22px/34px "Open Sans", sans-serif; letter-spacing: -.05px; padding-bottom: 4px; }
.save { width: 88px; background: #595959; gap: 19px; padding-left: 3px; }
.block { width: 61px; background: #e4e2e0; }
.moved { height: 57px; margin-top: 11px; background: #f5f5f5; padding: 1px 14px 0; display: flex; align-items: center; justify-content: space-between; width: 720px; }
.moved a { color: #2557a7; font-size: 19.500px; line-height: 26px; border-bottom: 2px solid #8fabd6; letter-spacing: .05px; }
.dbody { flex: 1; display: flex; overflow: hidden; }
.copy { width: 742px; padding: 20px 45px 0 23px; font-size: 22.500px; line-height: 33.850px; color: #595959; letter-spacing: -.21px; }
.copy p { margin-bottom: 22.650px; }
.copy b { letter-spacing: -.37px; }
.copy .num { letter-spacing: 0; }
.copy .types { letter-spacing: .1px; }
.copy .wide { letter-spacing: .28px; }
.copy ul { list-style: none; padding-left: 56px; letter-spacing: -.08px; }
.copy li { position: relative; }
.copy li::before { content: ""; position: absolute; left: -22px; top: 15px; width: 8px; height: 8px; border-radius: 50%; background: #595959; }
.dscroll { flex: 1; background: #f1f1f1; display: flex; flex-direction: column; align-items: center; padding: 12px 1px 0 0; }
.dscroll i { width: 20px; height: 76px; margin-top: 343px; background: #c1c1c1; }
.scroll { width: 23px; margin-left: auto; background: #424242; display: flex; flex-direction: column; align-items: center; padding: 10px 0 8px; }
.scroll i { width: 20px; height: 77px; margin: 372px 0 auto; background: #686868; }

/* Windows taskbar */
.taskbar { height: 60px; flex: none; background: #1c1c1c; border-top: 1px solid #3a3a3a; color: #fff; display: grid; grid-template-columns: 530px 1067px 1fr; }
.weather { display: flex; padding: 6px 0 0 23px; gap: 5px; font-size: 15px; line-height: 20px; letter-spacing: -.2px; }
.temp { padding-top: 2px; }
.cond { color: #c4c4c4; letter-spacing: -.37px; }
.apps { display: flex; align-items: center; }
.win { margin-right: 17px; }
.search { width: 275px; height: 40px; border: 1px solid #4d4d4d; border-radius: 20px; background: #3a3a3a; display: flex; align-items: center; padding: 0 11px 0 14px; gap: 11px; font-size: 17px; color: #d2d2d2; letter-spacing: .37px; margin-right: 2px; }
.diya { margin-left: auto; }
.app { position: relative; width: 55px; height: 59px; display: flex; align-items: center; justify-content: center; }
.run::after { content: ""; position: absolute; bottom: 6px; width: 8px; height: 4px; border-radius: 2px; background: #9a9a9a; }
.long::after { width: 12px; }
.tray { display: flex; align-items: center; font-size: 15px; line-height: 20px; letter-spacing: -.2px; padding-bottom: 1px; }
.lang { width: 40px; margin: -2px 0 0 21px; text-align: center; }
.status { display: flex; align-items: center; gap: 9px; margin-left: 17px; }
.clock { width: 97px; margin-top: -3px; text-align: right; letter-spacing: -.25px; }
.bell { margin-left: 11px; }
```
